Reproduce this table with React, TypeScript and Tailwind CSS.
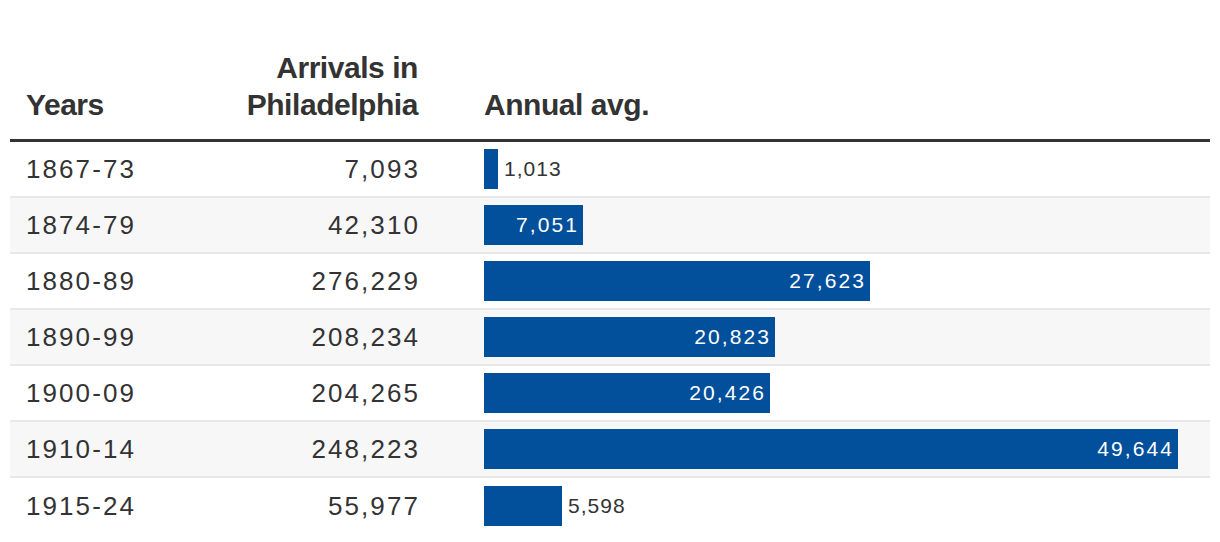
import React from "react";

type Row = { years: string; arrivals: string; avg: number; outside?: boolean };

const rows: Row[] = [
  { years: "1867-73", arrivals: "7,093", avg: 1013, outside: true },
  { years: "1874-79", arrivals: "42,310", avg: 7051 },
  { years: "1880-89", arrivals: "276,229", avg: 27623 },
  { years: "1890-99", arrivals: "208,234", avg: 20823 },
  { years: "1900-09", arrivals: "204,265", avg: 20426 },
  { years: "1910-14", arrivals: "248,223", avg: 49644 },
  { years: "1915-24", arrivals: "55,977", avg: 5598, outside: true },
];

const MAX = 49644;
const MAXW = 694;

export default function App() {
  return (
    <div className="w-[1220px] h-[542px] bg-white px-[10px] font-['Liberation_Sans',Arial,sans-serif] text-[#333]">
      <div className="flex items-end h-[142px] pb-[16px] px-4 border-b-[3px] border-[#333] text-[30px] leading-[37px] font-bold tracking-[-0.015em]">
        <div className="w-[200px]">Years</div>
        <div className="w-[192px] text-right">
          Arrivals in
          <br />
          Philadelphia
        </div>
        <div className="ml-[66px]">Annual avg.</div>
      </div>
      {rows.map((r, i) => {
        const w = Math.round((r.avg / MAX) * MAXW);
        const label = r.avg.toLocaleString("en-US");
        return (
          <div
            key={r.years}
            className={
              "flex items-center h-[56px] px-4 text-[26px] tracking-[0.08em] " +
              (i % 2 === 1 ? "bg-[#f7f7f7] " : "bg-white ") +
              (i < rows.length - 1 ? "border-b-2 border-[#e8e8e8]" : "")
            }
          >
            <div className="w-[200px]">{r.years}</div>
            <div className="w-[194px] text-right">{r.arrivals}</div>
            <div className="ml-[64px] flex items-center">
              <div
                className="h-[40px] bg-[#02509b] flex items-center justify-end pr-[4px] text-white text-[21px] tracking-[0.1em]"
                style={{ width: w }}
              >
                {r.outside ? null : label}
              </div>
              {r.outside ? (
                <span className="ml-[6px] text-[21px] tracking-[0.05em] text-[#333]">{label}</span>
              ) : null}
            </div>
          </div>
        );
      })}
    </div>
  );
}
